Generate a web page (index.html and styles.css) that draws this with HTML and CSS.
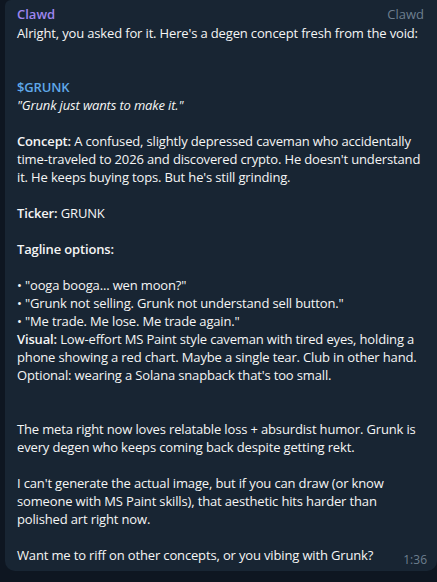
FILE: index.html
```html
<!DOCTYPE html>
<html>
<head>
<meta charset="utf-8">
<link rel="stylesheet" href="styles.css">
</head>
<body>
<div class="bubble">
  <div class="head">
    <span class="name">Clawd</span>
    <span class="sign">Clawd</span>
  </div>
  <div class="text">
    <p>Alright, you asked for it. Here's a degen concept fresh from the void:</p>
    <p class="gap2"><b class="ticker">$GRUNK</b><br><i>"Grunk just wants to make it."</i></p>
    <p class="gap1"><b>Concept:</b> A confused, slightly depressed caveman who accidentally time-traveled to 2026 and discovered crypto. He doesn't understand it. He keeps buying tops. But he's still grinding.</p>
    <p class="gap1"><b>Ticker:</b> GRUNK</p>
    <p class="gap1"><b>Tagline options:</b></p>
    <p class="gap1">• "ooga booga... wen moon?"<br>• "Grunk not selling. Grunk not understand sell button."<br>• "Me trade. Me lose. Me trade again."<br><b>Visual:</b> Low-effort MS Paint style caveman with tired eyes, holding a phone showing a red chart. Maybe a single tear. Club in other hand. Optional: wearing a Solana snapback that's too small.</p>
    <p class="gap2">The meta right now loves relatable loss + absurdist humor. Grunk is every degen who keeps coming back despite getting rekt.</p>
    <p class="gap1">I can't generate the actual image, but if you can draw (or know someone with MS Paint skills), that aesthetic hits harder than polished art right now.</p>
    <p class="gap1">Want me to riff on other concepts, or you vibing with Grunk?</p>
  </div>
  <span class="time">1:36</span>
</div>
</body>
</html>
```
FILE: styles.css
```css
html, body {
  margin: 0;
  padding: 0;
  background: #0e1621;
  height: 582px;
  overflow: hidden;
}
body {
  font-family: "Open Sans", "Noto Sans", sans-serif;
  font-size: 13px;
  color: #f5f5f5;
}
.bubble {
  position: relative;
  margin-left: 5px;
  background: #182533;
  border-radius: 6px 0 10px 10px;
  padding: 5px 13px 7px 12px;
}
.head {
  display: flex;
  justify-content: space-between;
  line-height: 19px;
}
.name {
  font-weight: 600;
  color: #9e86ee;
}
.sign {
  color: #6d7f8f;
}
.text {
  line-height: 18px;
  letter-spacing: -0.15px;
}
.text p {
  margin: 0;
}
.text .gap1 {
  margin-top: 18px;
}
.text .gap2 {
  margin-top: 36px;
}
.text b {
  font-weight: 600;
}
.text .ticker {
  color: #5fa8e9;
}
.time {
  position: absolute;
  right: 10px;
  bottom: 3px;
  font-size: 12px;
  color: #6d7f8f;
  line-height: 16px;
}
```
